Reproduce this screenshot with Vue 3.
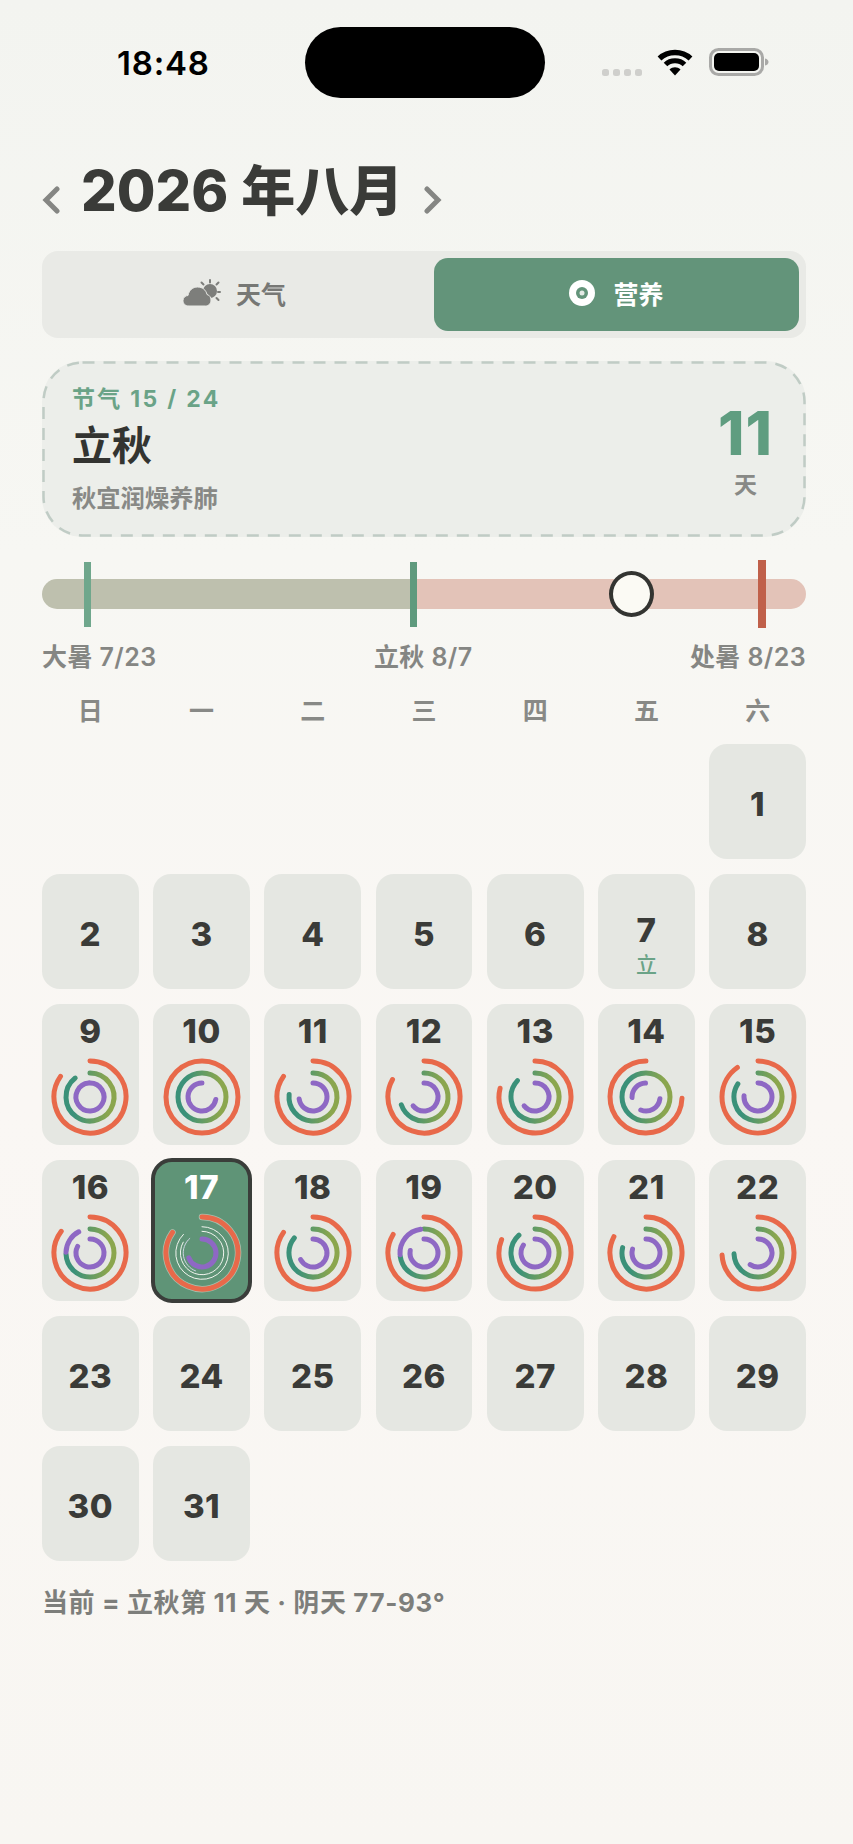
<template>
  <div class="page">
    <div class="status">
      <span class="time">18:48</span>
      <div class="island"></div>
      <div class="status-icons">
        <div class="dots"><i></i><i></i><i></i><i></i></div>
        <svg class="wifi" width="36" height="28" viewBox="0 0 36 28">
          <path d="M2.500 10.500C11 2.500 25 2.500 33.500 10.500" fill="none" stroke="#000" stroke-width="5.500" />
          <path d="M8.500 16.500C13.500 11.500 22.500 11.500 27.500 16.500" fill="none" stroke="#000" stroke-width="5" />
          <path d="M12.500 21.500C15.500 18.500 20.500 18.500 23.500 21.500L18 27.500Z" fill="#000" />
        </svg>
        <svg class="battery" width="60" height="28" viewBox="0 0 60 28">
          <rect x="1.500" y="1.500" width="52" height="25" rx="8" fill="none" stroke="#a9a9a7" stroke-width="3" />
          <rect x="5" y="5" width="45" height="18" rx="5" fill="#000" />
          <path d="M56 10.500C58.500 11 59.500 12.500 59.500 14C59.500 15.500 58.500 17 56 17.500Z" fill="#a9a9a7" />
        </svg>
      </div>
    </div>

    <div class="title-row">
      <svg class="chev" width="18" height="28" viewBox="0 0 18 28">
        <path d="M15 3L4 14L15 25" fill="none" stroke="#858683" stroke-width="5" stroke-linecap="round" />
      </svg>
      <h1>2026<span class="title-cjk">年八月</span></h1>
      <svg class="chev" width="18" height="28" viewBox="0 0 18 28">
        <path d="M3 3L14 14L3 25" fill="none" stroke="#858683" stroke-width="5" stroke-linecap="round" />
      </svg>
    </div>

    <div class="segment">
      <div class="tab plain">
        <svg width="38" height="28" viewBox="0 0 38 28">
          <circle cx="27" cy="12" r="7" fill="#7d7e7b" />
          <path d="M27 1V3.500M18.500 3.500L20.500 5.500M35.500 3.500L33.500 5.500M37 13H35M33.500 19L35.500 21" stroke="#7d7e7b" stroke-width="2" stroke-linecap="round" />
          <path d="M6 27C2 27 0 24.500 0 21.500C0 18.500 2.500 16.500 5 16.500C6 11 10 8 14.500 8C19.500 8 23 11 24 15.500C26.500 16 28 18.500 28 21C28 24.500 25.500 27 22.500 27Z" fill="#7d7e7b" stroke="#e9eae6" stroke-width="1" />
        </svg>
        <span>天气</span>
      </div>
      <div class="tab active">
        <svg width="26" height="26" viewBox="0 0 26 26">
          <circle cx="13" cy="13" r="13" fill="#fff" />
          <circle cx="13" cy="13" r="6" fill="#63947a" />
          <circle cx="13" cy="13" r="2.500" fill="#e4ebe6" />
        </svg>
        <span>营养</span>
      </div>
    </div>

    <div class="term-card">
      <svg class="dashes" width="764" height="176" viewBox="0 0 764 176">
        <rect x="1.500" y="1.500" width="761" height="173" rx="39" fill="none" stroke="#c0ccc5" stroke-width="2.500" stroke-dasharray="12 9" />
      </svg>
      <div>
        <div class="term-no">节气 15 / 24</div>
        <div class="term-name">立秋</div>
        <div class="term-tip">秋宜润燥养肺</div>
      </div>
      <div class="count">
        <div class="count-num">11</div>
        <div class="count-unit">天</div>
      </div>
    </div>

    <div class="timeline">
      <div class="track">
        <div class="track-left"></div>
        <div class="track-right"></div>
      </div>
      <i class="tick tick-a"></i>
      <i class="tick tick-b"></i>
      <i class="tick tick-c"></i>
      <i class="knob"></i>
    </div>
    <div class="tl-labels">
      <span>大暑 7/23</span>
      <span>立秋 8/7</span>
      <span>处暑 8/23</span>
    </div>

    <div class="weekdays">
      <span v-for="w in weekdays" :key="w">{{ w }}</span>
    </div>

    <div class="grid">
      <div
        v-for="d in days"
        :key="d.day"
        class="cell"
        :class="{ 'has-ring': d.ring, today: d.day === 17, first: d.day === 1, term: d.day === 7 }"
      >
        <span class="num">{{ d.day }}</span>
        <span v-if="d.day === 7" class="mark">立</span>
        <svg v-if="d.ring" class="ring" width="84" height="84" viewBox="0 0 84 84">
          <defs>
            <linearGradient :id="'mid' + d.day" gradientUnits="userSpaceOnUse" x1="26" y1="0" x2="60" y2="0">
              <stop offset="0" stop-color="#3b9179" />
              <stop offset="1" stop-color="#8ba64e" />
            </linearGradient>
          </defs>
          <g fill="none" stroke-linecap="round">
            <template v-if="d.day === 17">
              <path v-for="p in d.ring.outer" :key="p" :d="p" stroke="#e9efe8" stroke-opacity="0.500" stroke-width="6.500" />
            </template>
            <path v-for="p in d.ring.outer" :key="p" :d="p" stroke="#e8694a" stroke-width="5" />
            <template v-if="d.day === 17">
              <path v-for="p in d.ring.line1" :key="p" :d="p" stroke="#f1f4ee" stroke-width="1" />
              <path v-for="p in d.ring.line2" :key="p" :d="p" stroke="#f1f4ee" stroke-width="1" />
              <path v-for="p in d.ring.line3" :key="p" :d="p" stroke="#cfd4e4" stroke-width="1" />
            </template>
            <template v-else>
              <path v-for="p in d.ring.mid" :key="p" :d="p" :stroke="`url(#mid${d.day})`" stroke-width="5" />
              <path v-for="p in d.ring.tail" :key="p" :d="p" stroke="#8e68c4" stroke-width="5" />
            </template>
            <path v-for="p in d.ring.inner" :key="p" :d="p" stroke="#8e68c4" stroke-width="5" />
          </g>
        </svg>
      </div>
    </div>

    <p class="foot">当前 = 立秋第 11 天 · 阴天 77-93°</p>
  </div>
</template>

<script setup>
const weekdays = ["日", "一", "二", "三", "四", "五", "六"];

// ring angles in degrees, clockwise from 12 o'clock
const ringData = {
  9: { o: [[0, 305]], m: [[0, 322]], i: [[0, 355]] },
  10: { o: [[0, 360]], m: [[0, 360]], i: [[100, 360]] },
  11: { o: [[0, 305]], m: [[0, 276]], i: [[0, 262]] },
  12: { o: [[0, 299]], m: [[0, 251]], i: [[0, 231]] },
  13: { o: [[0, 284]], m: [[0, 313]], i: [[0, 231]] },
  14: { o: [[92, 360]], m: [[0, 360]], i: [[97, 202], [268, 358]] },
  15: { o: [[0, 325]], m: [[0, 303]], i: [[0, 275]] },
  16: { o: [[0, 307]], m: [[0, 268]], t: [[272, 332]], i: [[0, 298]] },
  17: { o: [[0, 305]], m: [[0, 315]], i: [[0, 250]] },
  18: { o: [[0, 305]], m: [[0, 309]], i: [[0, 242]] },
  19: { o: [[0, 301]], m: [[0, 262]], t: [[266, 352]], i: [[0, 280]] },
  20: { o: [[0, 292]], m: [[0, 318]], i: [[0, 304]] },
  21: { o: [[0, 297]], m: [[0, 283]], i: [[0, 286]] },
  22: { o: [[0, 267]], m: [[0, 268]], i: [[0, 214]] },
};

function point(deg, r) {
  const a = (deg * Math.PI) / 180;
  return `${(42 + r * Math.sin(a)).toFixed(2)} ${(42 - r * Math.cos(a)).toFixed(2)}`;
}

function arc(start, end, r) {
  if (end - start >= 360) {
    return `M${point(0, r)}A${r} ${r} 0 1 1 ${point(180, r)}A${r} ${r} 0 1 1 ${point(0, r)}`;
  }
  const large = end - start > 180 ? 1 : 0;
  return `M${point(start, r)}A${r} ${r} 0 ${large} 1 ${point(end, r)}`;
}

const arcs = (list, r) => (list || []).map(([s, e]) => arc(s, e, r));

function buildRing(data) {
  if (!data) return null;
  return {
    outer: arcs(data.o, 36),
    mid: arcs(data.m, 24),
    tail: arcs(data.t, 24),
    inner: arcs(data.i, 14),
    line1: arcs(data.m, 26.3),
    line2: arcs([[0, 300]], 21.7),
    line3: arcs([[200, 320]], 19),
  };
}

const days = Array.from({ length: 31 }, (_, i) => ({
  day: i + 1,
  ring: buildRing(ringData[i + 1]),
}));
</script>

<style>
html,
body {
  background: #f8f6f2;
}
</style>

<style scoped>
.page {
  box-sizing: border-box;
  width: 853px;
  height: 1844px;
  padding: 27px 47px 0 42px;
  background: linear-gradient(180deg, #f3f4f0 0%, #f7f7f3 30%, #faf7f4 60%, #f8f6f2 100%);
  font-family: Inter, "Noto Sans CJK SC", sans-serif;
  color: #3a3b38;
  overflow: hidden;
}

.status {
  display: flex;
  align-items: flex-start;
  height: 71px;
  width: 727px;
}

.time {
  margin: 17px 0 0 75px;
  width: 188px;
  font-size: 33px;
  line-height: 38px;
  font-weight: 600;
  letter-spacing: 0.800px;
  color: #000;
}

.island {
  width: 240px;
  height: 71px;
  border-radius: 36px;
  background: #000;
}

.status-icons {
  display: flex;
  align-items: flex-end;
  margin: 22px 0 0 57px;
  height: 27px;
}

.dots {
  display: flex;
  gap: 4px;
  margin-right: 15px;
}

.dots i {
  width: 7px;
  height: 7px;
  border-radius: 2.500px;
  background: #cfcfcc;
}

.wifi {
  margin-right: 16px;
}

.title-row {
  display: flex;
  align-items: center;
  gap: 21px;
  margin-top: 57px;
  height: 72px;
}

.title-row h1 {
  margin: 0;
  font-size: 56px;
  line-height: 72px;
  font-weight: 800;
  white-space: nowrap;
}

.title-cjk {
  margin-left: 13px;
  font-size: 54px;
}

.chev {
  margin-top: 18px;
}

.segment {
  display: flex;
  width: 764px;
  height: 87px;
  margin-top: 24px;
  padding: 7px;
  box-sizing: border-box;
  border-radius: 16px;
  background: #e9eae6;
}

.tab {
  flex: 1;
  display: flex;
  align-items: center;
  justify-content: center;
  gap: 15px;
  padding-bottom: 3px;
  border-radius: 14px;
  font-size: 25px;
  font-weight: 600;
  color: #777875;
}

.tab.plain {
  padding-right: 14px;
}

.tab.active {
  flex: 0 0 365px;
  background: #63947a;
  color: #fff;
  gap: 18px;
}

.term-card {
  position: relative;
  box-sizing: border-box;
  display: flex;
  justify-content: space-between;
  width: 764px;
  height: 176px;
  margin-top: 23px;
  padding: 23px 33px 0 30px;
  border-radius: 40px;
  background: #eceeea;
}

.dashes {
  position: absolute;
  left: 0;
  top: 0;
}

.term-no {
  font-size: 23px;
  line-height: 30px;
  font-weight: 700;
  letter-spacing: 2.300px;
  color: #6aa387;
}

.term-name {
  margin-top: 6px;
  font-size: 40px;
  line-height: 52px;
  font-weight: 700;
  color: #333431;
}

.term-tip {
  margin-top: 9px;
  font-size: 24.300px;
  line-height: 34px;
  font-weight: 600;
  color: #888986;
}

.count {
  padding-top: 14px;
  text-align: center;
}

.count-num {
  font-size: 60px;
  line-height: 70px;
  font-weight: 800;
  letter-spacing: 1px;
  color: #5f9d80;
}

.count-unit {
  margin-top: 2px;
  font-size: 23px;
  line-height: 30px;
  font-weight: 600;
  color: #888986;
}

.timeline {
  position: relative;
  width: 764px;
  height: 68px;
  margin-top: 23px;
}

.track {
  display: flex;
  height: 30px;
  margin-top: 19px;
  position: absolute;
  left: 0;
  right: 0;
  border-radius: 15px;
  overflow: hidden;
}

.track-left {
  width: 368px;
  background: #bec0ae;
}

.track-right {
  flex: 1;
  background: #e3c3b8;
}

.tick {
  position: absolute;
  top: 2px;
  width: 7px;
  height: 65px;
}

.tick-a {
  left: 42px;
  background: #6fa78c;
}

.tick-b {
  left: 368px;
  background: #5f9a7d;
}

.tick-c {
  left: 716px;
  top: 0;
  width: 8px;
  height: 68px;
  background: #c0604a;
}

.knob {
  position: absolute;
  left: 567px;
  top: 11px;
  box-sizing: border-box;
  width: 45px;
  height: 46px;
  border: 4px solid #333431;
  border-radius: 50%;
  background: #fbfaf4;
}

.tl-labels {
  display: flex;
  justify-content: space-between;
  width: 764px;
  margin-top: 12px;
  font-size: 25px;
  line-height: 34px;
  font-weight: 600;
  letter-spacing: 0.400px;
  color: #858683;
}

.weekdays {
  display: grid;
  grid-template-columns: repeat(7, 1fr);
  column-gap: 14.500px;
  width: 764px;
  margin-top: 20px;
  text-align: center;
  font-size: 25px;
  line-height: 34px;
  font-weight: 600;
  color: #888986;
}

.grid {
  display: grid;
  grid-template-columns: repeat(7, 1fr);
  gap: 15px 14.500px;
  width: 764px;
  margin-top: 16px;
}

.cell {
  box-sizing: border-box;
  display: flex;
  flex-direction: column;
  align-items: center;
  justify-content: center;
  height: 115px;
  padding-top: 4px;
  border-radius: 18px;
  background: #e5e7e2;
}

.cell.first {
  grid-column-start: 7;
}

.cell.term {
  padding-top: 26px;
}

.num {
  font-size: 33px;
  line-height: 38px;
  font-weight: 800;
  letter-spacing: 0.500px;
}

.mark {
  margin-top: 3px;
  font-size: 21px;
  line-height: 26px;
  font-weight: 500;
  color: #6aa387;
}

.cell.has-ring {
  justify-content: flex-start;
  height: 141px;
  padding-top: 8px;
}

.ring {
  margin-top: 5px;
}

.cell.today {
  height: 145px;
  margin: -2px;
  padding-top: 6px;
  border: 4px solid #3a3d3a;
  border-radius: 21px;
  background: #5f9477;
  color: #fff;
}

.foot {
  margin: 24px 0 0;
  font-size: 26px;
  line-height: 36px;
  font-weight: 700;
  letter-spacing: 0.600px;
  color: #7d7e7b;
}
</style>
